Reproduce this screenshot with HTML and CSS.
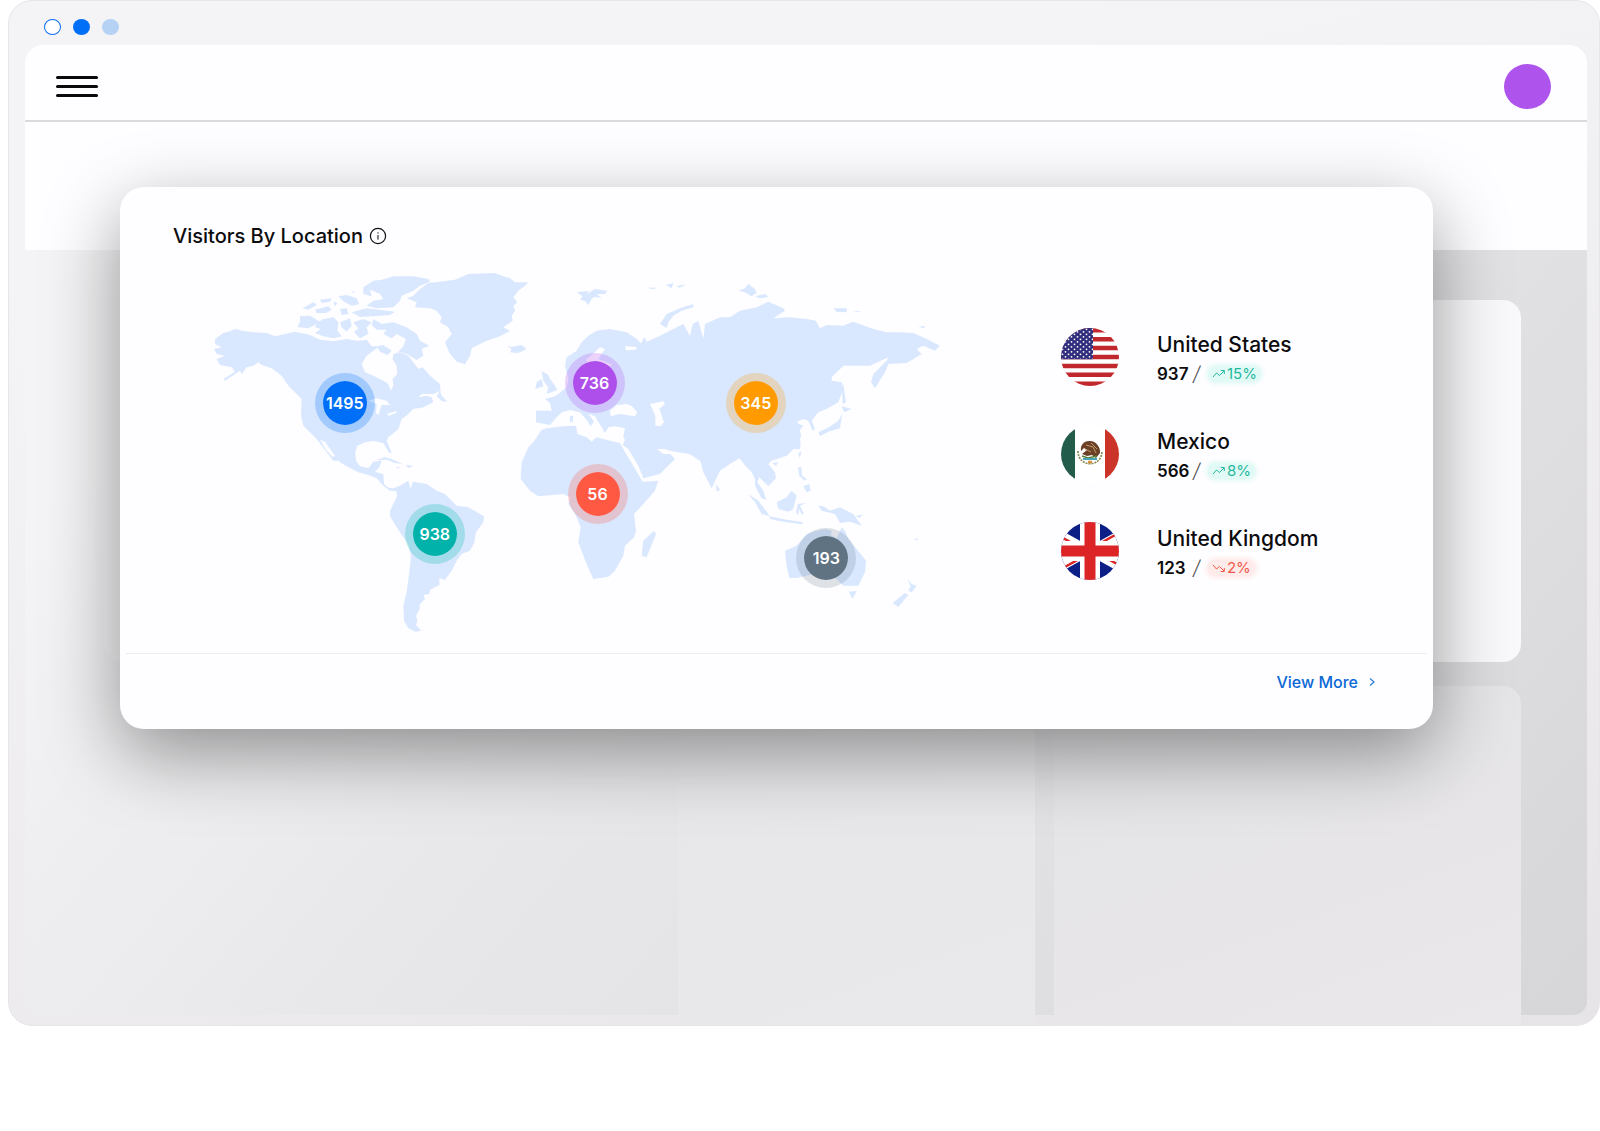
FILE: index.html
```html
<!DOCTYPE html>
<html lang="en">
<head>
<meta charset="utf-8">
<title>Visitors By Location</title>
<link rel="stylesheet" href="styles.css">
</head>
<body>
<div class="window">
  <div class="window-dots"><span class="dot dot-open"></span><span class="dot dot-solid"></span><span class="dot dot-pale"></span></div>
  <div class="screen">
    <header class="topbar">
      <button class="menu" type="button" aria-label="Menu"><span></span><span></span><span></span></button>
      <button class="avatar" type="button" aria-label="Account"></button>
    </header>
    <div class="stage">
      <div class="backdrop">
        <div class="band"></div>
        <div class="panel-wide"></div>
        <div class="panel-row">
          <div class="panel-mid"></div>
          <div class="panel-end"></div>
        </div>
      </div>
      <main class="card">
        <h1 class="title">Visitors By Location
          <svg class="info" viewBox="0 0 18 18" width="18" height="18" fill="none" stroke="#111" aria-hidden="true"><circle cx="9" cy="9" r="7.6" stroke-width="1.2"/><path d="M9 8v4.6M9 5.3v1.3"/></svg>
        </h1>
        <div class="content">
          <div class="map">
            <svg class="world" viewBox="0 0 2250 1130" aria-hidden="true">
              <g class="land">
                <path d="M45 240L70 222L85 218L105 210L130 216L160 220L200 222L225 232L285 218L330 228L360 242L400 247L440 240L470 245L500 243L515 262L540 262L520 275L500 290L485 315L495 340L520 350L550 365L565 375L572 395L580 380L578 360L592 345L590 320L578 300L580 285L600 280L625 290L640 310L655 330L668 325L690 350L720 375L722 395L700 405L665 405L655 415L680 410L695 415L700 430L670 445L640 450L625 465L605 480L595 510L565 535L560 545L572 575L568 580L555 552L520 545L495 550L470 562L465 585L468 605L400 605L350 540L310 500L303 470L305 420L290 405L265 380L245 350L215 328L185 318L175 310L160 320L140 325L125 345L120 335L75 365L70 360L105 338L95 325L60 318L50 300L75 290L50 285L42 270L65 265L45 255Z"/>
                <path d="M490 85L520 65L545 62L580 52L640 52L685 60L690 68L660 80L640 95L605 110L600 125L580 145L530 148L500 140L520 125L550 120L540 105L510 92L515 112L490 105Z"/>
                <path d="M300 172L330 170L350 182L360 188L340 200L325 208L292 204L300 188ZM350 192L370 180L400 175L415 190L412 215L425 232L400 238L370 232L345 222L362 210L345 205ZM308 148L340 130L350 138L325 152ZM345 152L385 142L395 152L378 162L350 162ZM360 122L395 118L390 128L365 132ZM415 112L440 108L470 118L478 136L455 140L432 128ZM420 150L440 148L445 165L425 168ZM455 160L500 148L560 155L585 158L570 168L520 172L480 174ZM420 190L450 178L455 200L440 218L425 205ZM460 190L490 180L515 190L500 205L505 225L480 238L462 220L475 208ZM400 128L412 132L405 142ZM456 96L464 98L460 104Z"/>
                <path d="M520 180L545 195L580 190L620 205L650 225L660 245L688 260L665 270L670 290L650 303L620 285L595 278L610 262L618 240L590 225L575 238L550 225L560 212L530 212L515 198ZM530 262L550 258L575 275L562 288L540 278Z"/>
                <path d="M710 412L720 395L725 410L742 428L725 426Z"/>
                <g transform="translate(600 0)"><path d="M20 118L40 110L60 90L85 72L120 68L165 62L205 45L285 42L310 52L330 58L345 70L384 70L375 80L355 95L340 115L352 130L340 140L345 155L335 170L338 185L310 205L330 215L300 232L260 245L215 268L210 290L195 316L170 308L150 285L135 250L155 225L145 205L120 190L125 175L110 155L90 148L45 145L50 130ZM322 260L335 264L365 258L380 270L355 282L330 280L335 270Z"/></g>
                <g transform="translate(420 540)"><path d="M-75 -5L130 0L140 15L155 40L148 42L130 12L100 5L70 10L52 18L45 40L48 65L60 82L85 88L100 68L125 65L118 85L105 98L130 106L132 135L145 146L160 148L180 140L205 125L212 150L218 128L260 135L290 155L315 165L335 185L350 200L385 205L432 232L430 250L408 280L403 310L390 335L365 345L350 365L335 395L315 422L298 418L298 438L270 452L268 465L250 468L255 480L240 495L238 512L228 530L232 545L228 558L244 575L225 578L205 568L192 545L190 500L200 460L208 400L213 350L205 315L190 295L170 265L150 232L150 215L160 195L172 170L168 156L150 155L130 140L110 118L85 108L55 100L20 82L0 70L-20 40ZM108 64L135 54L160 62L188 76L165 72L140 62ZM196 78L220 80L205 87ZM168 84L180 85L172 89Z"/></g>
                <g transform="translate(900 60)"><path d="M108 395L155 395L150 372L135 360L165 352L175 345L200 325L205 300L195 260L200 235L230 215L245 190L265 170L290 155L330 150L380 160L410 180L425 195L435 175L440 198L470 180L520 160L550 152L575 175L575 165L604 165L604 500L380 500L370 470L375 448L345 442L325 445L315 462L302 440L285 412L265 404L282 428L272 442L262 425L240 400L210 393L185 400L165 420L150 438L108 430Z"/><path d="M125 275L145 288L150 300L165 320L172 333L140 345L145 325L130 305ZM110 310L125 300L130 322L106 330ZM230 40L265 35L262 44L285 30L322 35L315 45L290 46L305 56L282 54L275 60L265 78L255 66L240 62L248 52ZM480 135L500 105L540 88L580 75L580 85L545 95L520 110L505 130L500 147ZM210 412L220 410L218 430L210 428Z"/></g>
                <g transform="translate(900 420)"><path d="M125 92L140 88L190 82L228 80L232 105L260 115L275 128L290 115L330 125L360 132L375 160L400 200L428 248L475 245L465 275L430 315L402 345L408 395L402 415L375 440L370 470L345 515L325 533L280 540L262 500L235 430L242 385L228 350L205 315L210 295L190 285L115 292L90 275L62 240L65 190L85 145L100 130Z"/><path d="M380 60L380 112L368 138L385 150L415 200L430 238L480 225L525 180L510 165L490 165L465 145L456 128L480 145L510 155L560 158L604 188L604 60ZM462 395L468 405L440 475L425 470L430 425Z"/></g>
                <g transform="translate(1320 30)"><path d="M0 230L12 205L20 218L60 200L130 165L150 200L158 165L175 155L190 210L195 165L240 145L270 145L300 125L350 115L385 98L430 118L435 125L400 148L450 145L500 150L527 155L540 178L560 168L610 170L640 158L700 180L740 190L780 190L820 192L860 210L900 230L885 245L850 230L830 240L845 255L800 282L745 285L735 310L705 358L693 340L700 315L740 275L745 265L690 290L610 290L575 325L575 335L605 340L610 360L595 400L560 420L535 430L515 455L525 480L518 485L505 455L490 450L465 460L490 470L475 490L482 520L480 540L0 540Z"/><path d="M610 345L618 400L608 405L606 360ZM605 412L635 420L612 430ZM606 435L600 478L565 488L540 502L536 490L568 474L595 455ZM295 65L315 58L325 45L345 60L350 72L335 82L315 70ZM345 82L375 75L385 84L360 88ZM580 118L620 118L620 130L590 128ZM640 126L660 126L655 130ZM835 172L858 172L850 178ZM20 56L50 56L40 61ZM78 48L100 42L95 58ZM108 52L138 46L120 56Z"/></g>
                <g transform="translate(1320 420)"><path d="M0 60L470 60L484 110L470 140L440 170L395 185L385 195L405 220L408 238L385 262L358 235L352 250L370 275L378 302L365 298L345 260L345 240L335 220L320 205L298 178L270 195L240 215L228 240L215 268L190 220L180 180L150 165L105 158L60 145L35 130L20 120L0 130Z"/><path d="M228 255L240 272L230 278ZM325 285L355 305L385 345L388 352L365 345L345 310ZM388 352L440 362L490 370L485 376L420 367L390 359ZM410 310L440 295L455 275L470 290L460 330L445 338L415 330ZM474 315L498 312L480 320L492 345L484 345L478 330L474 348L468 340ZM535 320L550 322L570 335L600 325L640 345L665 380L630 368L600 372L585 345L545 335ZM645 352L668 346L660 356ZM398 192L414 190L408 202ZM475 165L484 155L480 178ZM474 205L484 205L486 230L500 240L494 245L478 230ZM490 262L508 255L512 275L500 280ZM435 455L470 440L500 405L530 395L555 390L575 395L572 408L590 418L605 385L615 395L625 420L650 450L678 485L675 520L655 560L610 560L590 540L570 530L520 525L470 537L448 537L440 500ZM626 578L650 576L638 600ZM802 540L815 555L830 560L815 580L805 575L812 562ZM758 612L795 582L805 588L775 624ZM822 422L834 416L832 424Z"/></g>
              </g>
              <g class="sea">
                <path d="M360 542L375 548L405 590L398 594L378 572Z"/>
                <path d="M505 425L530 418L560 425L570 438L545 438L535 468L528 462L530 436ZM560 465L592 455L588 462L566 470Z"/>
                <path d="M1230 455L1250 438L1280 435L1296 442L1312 460L1305 472L1260 465L1232 472ZM1350 435L1390 427L1395 435L1378 450L1392 490L1382 502L1366 500L1366 470Z"/>
                <path d="M1275 262L1310 264L1308 272L1278 274ZM1160 300L1178 285L1200 265L1215 270L1195 300L1240 318L1205 325L1170 355L1158 340Z"/>
              </g>
            </svg>
            <span class="pin pin-us">1495</span>
            <span class="pin pin-eu">736</span>
            <span class="pin pin-as">345</span>
            <span class="pin pin-sa">938</span>
            <span class="pin pin-af">56</span>
            <span class="pin pin-au">193</span>
          </div>
          <ul class="countries">
            <li class="country">
              <svg class="flag" viewBox="0 0 58 58" aria-hidden="true">
                <defs>
                  <clipPath id="round"><circle cx="29" cy="29" r="29"/></clipPath>
                  <pattern id="stars" width="6" height="5" patternUnits="userSpaceOnUse"><circle cx="1.5" cy="1.3" r=".9" fill="#fff"/><circle cx="4.5" cy="3.8" r=".9" fill="#fff"/></pattern>
                </defs>
                <g clip-path="url(#round)">
                  <path fill="#fff" d="M0 0h58v58H0z"/>
                  <path stroke="#c0282d" stroke-width="4.46" d="M0 2.23h58M0 11.15h58M0 20.08h58M0 29h58M0 37.92h58M0 46.85h58M0 55.77h58"/>
                  <path fill="#312f7d" d="M0 0h32v31.2H0z"/><path fill="url(#stars)" d="M0 0h32v31H0z"/>
                </g>
              </svg>
              <div class="facts">
                <h2 class="name">United States</h2>
                <p class="stat"><b>937</b><i class="slash">/</i><span class="trend up"><svg class="arrow" viewBox="0 0 13 10" aria-hidden="true"><path d="M1 8L4.500 4L7.500 6.500L12 2M8.800 1.500H12.300V5"/></svg>15%</span></p>
              </div>
            </li>
            <li class="country">
              <svg class="flag" viewBox="0 0 58 58" aria-hidden="true">
                <g clip-path="url(#round)">
                  <path fill="#fff" d="M0 0h58v58H0z"/><path fill="#245c4b" d="M0 0h14v58H0z"/><path fill="#cb3529" d="M44 0h14v58H44z"/>
                </g>
                <path d="M17 26C17 43 41 43 41 26" fill="none" stroke="#8b8a55" stroke-width="1.700" stroke-dasharray="2 1"/>
                <path d="M20 26C19 19 24 16 28 16C34 15 40 22 39 28L35 33L31 30L26 31L21 29L26 25L23 23Z" fill="#6b4026"/>
                <path d="M25 20L32 22L35 28M24 24L30 27M30 18L36 24" fill="none" stroke="#c29a6a"/>
                <path d="M21 31L27 33L36 31" fill="none" stroke="#5a7d3c" stroke-width="1.500"/>
                <path d="M22 34H36" stroke="#45a5b5" stroke-width="2"/>
                <path d="M27 37H31" stroke="#d9903a" stroke-width="2.500"/>
              </svg>
              <div class="facts">
                <h2 class="name">Mexico</h2>
                <p class="stat"><b>566</b><i class="slash">/</i><span class="trend up"><svg class="arrow" viewBox="0 0 13 10" aria-hidden="true"><path d="M1 8L4.500 4L7.500 6.500L12 2M8.800 1.500H12.300V5"/></svg>8%</span></p>
              </div>
            </li>
            <li class="country">
              <svg class="flag" viewBox="0 0 58 58" aria-hidden="true">
                <g clip-path="url(#round)">
                  <path fill="#0b1f86" d="M0 0h58v58H0z"/>
                  <path stroke="#fff" stroke-width="8" d="M-14 5L72 53M72 5L-14 53"/>
                  <path stroke="#dc2326" stroke-width="2.500" d="M-14 7L29 31M72 51L29 27M72 3L29 27M-14 55L29 31"/>
                  <path stroke="#fff" stroke-width="20" d="M29 0V58M0 29H58"/>
                  <path stroke="#dc2326" stroke-width="11" d="M29 0V58M0 29H58"/>
                </g>
              </svg>
              <div class="facts">
                <h2 class="name">United Kingdom</h2>
                <p class="stat"><b>123</b><i class="slash">/</i><span class="trend down"><svg class="arrow" viewBox="0 0 13 10" aria-hidden="true"><path d="M1 2L4.500 6L7.500 3.500L12 8M8.800 8.500H12.300V5"/></svg>2%</span></p>
              </div>
            </li>
          </ul>
        </div>
        <footer class="footer">
          <a class="more" href="#more">View More
            <svg class="chevron" viewBox="0 0 6 10" width="6" height="10" fill="none" stroke="#2a7fd6" stroke-width="1.200" aria-hidden="true"><path d="M1 1.500L5 5L1 8.500"/></svg>
          </a>
        </footer>
      </main>
    </div>
  </div>
</div>
</body>
</html>
```

FILE: styles.css
```css
* { box-sizing: border-box; margin: 0; }

body {
  background: #fff;
  color: #0c0c0e;
  font-family: Inter, "Liberation Sans", sans-serif;
}

button { padding: 0; border: 0; background: none; }

.window {
  margin-left: 8px;
  padding: 0 12px 10px 16px;
  border: 1px solid #e6e5e7;
  border-radius: 24px;
  background: linear-gradient(165deg, #f4f3f5 20%, #eceaed 75%, #e6e4e7);
}

.window-dots {
  display: flex;
  align-items: center;
  gap: 12px;
  height: 44px;
  padding: 7px 0 0 19px;
}

.dot { width: 17px; height: 16px; border-radius: 50%; }
.dot-open { border: 1px solid #0a6ef5; background: #fff; }
.dot-solid { background: #006ff8; }
.dot-pale { background: #b5d1f4; }

.topbar {
  display: flex;
  align-items: center;
  justify-content: space-between;
  height: 77px;
  padding: 7px 36px 0 31px;
  border-bottom: 2px solid #dad9dc;
  border-radius: 18px 18px 0 0;
  background: #fefdff;
}

.menu { display: grid; gap: 6px; width: 42px; }
.menu span { height: 3px; border-radius: 2px; background: #0a0a0a; }

.avatar { width: 47px; height: 45px; border-radius: 50%; background: #ae54ec; }

/* The card and the page behind it share one grid cell. */
.stage { display: grid; }
.stage > * { grid-area: 1 / 1; }

.backdrop {
  display: flex;
  flex-direction: column;
  min-height: 893px;
  border-radius: 0 0 14px 14px;
  background: linear-gradient(130deg, #f4f3f5 15%, #e9e8ea 42%, #e3e2e4 65%, #d6d5d7);
}

.band { height: 128px; background: #fefdff; }

.panel-wide {
  height: 362px;
  margin: 50px 66px 24px 79px;
  border-radius: 18px;
  background: linear-gradient(90deg, #f4f3f5, #f9f8fa);
}

.panel-row {
  flex: 1;
  display: grid;
  grid-template-columns: 357fr 468fr;
  gap: 19px;
  margin: 0 66px -10px 653px;
}

.panel-mid { background: linear-gradient(160deg, #e7e6e8, #e9e8ea); }
.panel-end { border-radius: 0 18px 0 0; background: linear-gradient(160deg, #e3e2e4, #eae8eb); }

.card {
  align-self: start;
  margin: 65px 154px 0 95px;
  border-radius: 24px;
  background: #fefdff;
  box-shadow: 0 24px 76px rgba(0, 0, 0, .4);
}

.title {
  display: flex;
  align-items: center;
  gap: 6px;
  height: 72px;
  padding: 25px 0 0 53px;
  font-size: 20px;
  font-weight: 500;
}

.content {
  display: flex;
  align-items: flex-start;
  padding: 0 40px 17px 80px;
}

.map { position: relative; flex: 750; }
.world { display: block; width: 100%; }
.land { fill: #d9e8ff; }
.sea { fill: #fefdff; }

.pin {
  position: absolute;
  width: 60px;
  height: 60px;
  margin: -30px 0 0 -30px;
  border: 8px solid;
  border-radius: 50%;
  background-clip: padding-box;
  color: #fff;
  font-size: 16px;
  font-weight: 600;
  line-height: 44px;
  text-align: center;
}

.pin-us { left: 19.3%; top: 38.2%; border-color: rgba(0, 111, 248, .25); background-color: #006ff8; }
.pin-eu { left: 52.6%; top: 32.8%; border-color: rgba(174, 84, 236, .25); background-color: #ae4eeb; }
.pin-as { left: 74.1%; top: 38.3%; border-color: rgba(255, 153, 0, .25); background-color: #ff9b00; }
.pin-sa { left: 31.3%; top: 73%; border-color: rgba(0, 178, 169, .25); background-color: #00b2a9; }
.pin-af { left: 53%; top: 62.4%; border-color: rgba(255, 88, 67, .25); background-color: #ff5843; }
.pin-au { left: 83.5%; top: 79.4%; border-color: rgba(95, 115, 130, .2); background-color: #5f7382; }

.countries {
  flex: 332;
  display: grid;
  gap: 39px;
  margin-left: 111px;
  padding: 69px 0 0;
  list-style: none;
}

.country { display: flex; gap: 38px; height: 58px; }
.flag { flex: none; width: 58px; height: 58px; }
.name { padding-top: 2px; font-size: 21px; font-weight: 500; line-height: 30px; white-space: nowrap; }
.stat { display: flex; align-items: center; font-size: 17px; line-height: 28px; }
.stat b { min-width: 36px; font-weight: 600; }
.slash { color: #555; font-size: 20px; font-weight: 300; }

.trend {
  display: flex;
  align-items: center;
  gap: 2px;
  margin-left: 8px;
  padding: 0 4px;
  border-radius: 8px;
  font-size: 15px;
  line-height: 16px;
}

.arrow { width: 13px; height: 10px; fill: none; stroke: currentColor; }
.up { color: #1fb89d; background: #e2faf6; box-shadow: 0 0 4px 2px #e2faf6; }
.down { color: #f2594b; background: #ffebe9; box-shadow: 0 0 4px 2px #ffebe9; }

.footer {
  height: 76px;
  margin: 0 6px;
  padding: 18px 52px 0 0;
  border-top: 1px solid #ededf0;
  text-align: right;
}

.more {
  display: inline-flex;
  align-items: center;
  gap: 11px;
  color: #0a69d6;
  font-size: 16px;
  font-weight: 500;
  line-height: 20px;
  text-decoration: none;
}
```
